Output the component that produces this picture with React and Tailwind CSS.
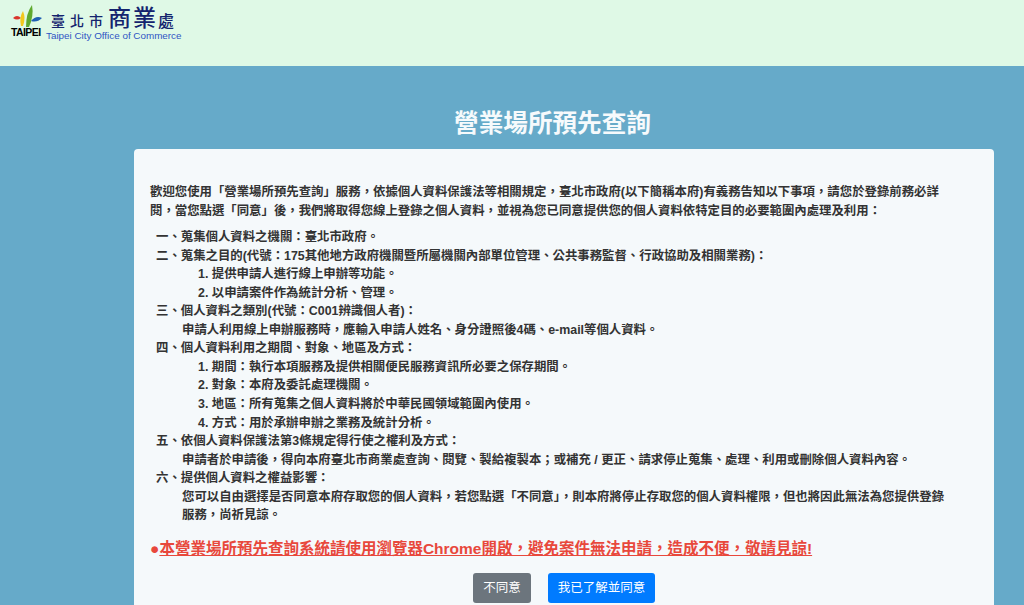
const ITEMS = [
  { head: '一、蒐集個人資料之機關：臺北市政府。' },
  {
    head: '二、蒐集之目的(代號：175其他地方政府機關暨所屬機關內部單位管理、公共事務監督、行政協助及相關業務)：',
    subs: ['1. 提供申請人進行線上申辦等功能。', '2. 以申請案件作為統計分析、管理。'],
  },
  {
    head: '三、個人資料之類別(代號：C001辨識個人者)：',
    body: ['申請人利用線上申辦服務時，應輸入申請人姓名、身分證照後4碼、e-mail等個人資料。'],
  },
  {
    head: '四、個人資料利用之期間、對象、地區及方式：',
    subs: [
      '1. 期間：執行本項服務及提供相關便民服務資訊所必要之保存期間。',
      '2. 對象：本府及委託處理機關。',
      '3. 地區：所有蒐集之個人資料將於中華民國領域範圍內使用。',
      '4. 方式：用於承辦申辦之業務及統計分析。',
    ],
  },
  {
    head: '五、依個人資料保護法第3條規定得行使之權利及方式：',
    body: ['申請者於申請後，得向本府臺北市商業處查詢、閱覽、製給複製本；或補充 / 更正、請求停止蒐集、處理、利用或刪除個人資料內容。'],
  },
  {
    head: '六、提供個人資料之權益影響：',
    body: ['您可以自由選擇是否同意本府存取您的個人資料，若您點選「不同意」，則本府將停止存取您的個人資料權限，但也將因此無法為您提供登錄服務，尚祈見諒。'],
  },
]

function Logo() {
  return (
    <div className="flex items-start pl-[11px] pt-[3px]">
      <div className="flex flex-col items-start w-[36px] pt-[1px]">
        <svg width="32" height="24" viewBox="0 0 32 24">
          <path d="M2 14 Q6 10 10 14 Q6 17 2 14Z" fill="#d9342b" />
          <path d="M10 22 Q8 13 12 7 Q15 14 12 22Z" fill="#f2c81e" />
          <path d="M15 23 Q15 9 21 1 Q23 12 18 23Z" fill="#5fa92f" />
          <path d="M20 17 Q25 11 31 14 Q26 19 20 17Z" fill="#1f5fb4" />
        </svg>
        <span className="font-['Liberation_Sans'] text-[10.5px] leading-[9px] font-bold text-black tracking-[-0.6px] whitespace-nowrap">TAIPEI</span>
      </div>
      <div className="flex flex-col ml-[-1px]">
        <div className="flex items-end h-[26px] pl-[5px] font-['Noto_Sans_CJK_TC'] text-[#14246e] font-medium">
          <span className="text-[14px] leading-[18px] tracking-[5px]">臺北市</span>
          <span className="text-[23px] leading-[25px] tracking-[2px]">商業</span>
          <span className="text-[16px] leading-[18px]">處</span>
        </div>
        <span className="font-['Liberation_Sans'] text-[9.85px] leading-[12px] mt-[1px] text-[#2f55c4] whitespace-nowrap">Taipei City Office of Commerce</span>
      </div>
    </div>
  )
}

export default function App() {
  return (
    <div className="h-screen overflow-hidden bg-[#66aac9] font-['Liberation_Sans','Noto_Sans_CJK_TC',sans-serif]">
      <header className="h-[66px] bg-[#dff9e6]">
        <Logo />
      </header>

      <h1 className="pl-[81px] pt-[41px] pb-[9px] text-center text-[24.6px] leading-[33px] font-bold text-[#f6fafc]">
        營業場所預先查詢
      </h1>

      <main className="ml-[134px] mr-[30px] rounded-[4px] bg-[#f5f9fb] px-[16px] pt-[34px] pb-[20px] text-[12.4px] leading-[18.55px] font-bold text-[#333333]">
        <p className="mb-[8px] mr-[33px]">
          歡迎您使用「營業場所預先查詢」服務，依據個人資料保護法等相關規定，臺北市政府(以下簡稱本府)有義務告知以下事項，請您於登錄前務必詳閱，當您點選「同意」後，我們將取得您線上登錄之個人資料，並視為您已同意提供您的個人資料依特定目的必要範圍內處理及利用：
        </p>

        <div className="pl-[6px]">
          {ITEMS.map(item => (
            <div key={item.head}>
              <div>{item.head}</div>
              {item.subs?.map(s => <div key={s} className="pl-[42px]">{s}</div>)}
              {item.body?.map(b => <div key={b} className="pl-[26px] pr-[26px]">{b}</div>)}
            </div>
          ))}
        </div>

        <p className="mt-[12px] text-[15.5px] leading-[24px] font-bold text-[#e8483c] whitespace-nowrap">
          ●<span className="underline">本營業場所預先查詢系統請使用瀏覽器Chrome開啟，避免案件無法申請，造成不便，敬請見諒!</span>
        </p>

        <div className="flex justify-center gap-[17px] mt-[12px]">
          <button type="button" className="h-[30px] w-[58px] rounded-[3px] bg-[#6c757d] text-[12.5px] font-normal text-white">不同意</button>
          <button type="button" className="h-[30px] w-[107px] rounded-[3px] bg-[#007bff] text-[12.5px] font-normal text-white">我已了解並同意</button>
        </div>
      </main>
    </div>
  )
}
